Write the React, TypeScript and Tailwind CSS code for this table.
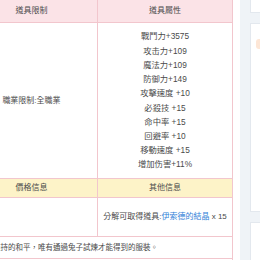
const stats = [
  "戰鬥力+3575",
  "攻击力+109",
  "魔法力+109",
  "防御力+149",
  "攻擊速度 +10",
  "必殺技 +15",
  "命中率 +15",
  "回避率 +10",
  "移動速度 +15",
  "增加伤害+11%",
];

export default function App() {
  return (
    <div className="w-[260px] h-[260px] overflow-hidden flex bg-white text-[#4a4a4a] text-[8px] font-['Liberation_Sans','Noto_Sans_CJK_TC',sans-serif]">
      {/* item table */}
      <div className="w-[268px] -ml-[35px] shrink-0 border-x border-[#f2c6cd] flex flex-col">
        <div className="flex h-[23px] border-b border-[#f2c6cd] bg-[#fbe3e7]">
          <div className="w-[132px] border-r border-[#f2c6cd] flex items-center justify-center">道具限制</div>
          <div className="flex-1 flex items-center justify-center">道具屬性</div>
        </div>
        <div className="flex h-[156px] border-b border-[#f2c6cd]">
          <div className="w-[132px] border-r border-[#f2c6cd] flex items-center justify-center">職業限制:全職業</div>
          <div className="flex-1 flex flex-col items-center justify-center leading-[14.2px] text-[8.3px]">
            {stats.map((s) => (
              <div key={s}>{s}</div>
            ))}
          </div>
        </div>
        <div className="flex h-[19px] border-b border-[#f2c6cd] bg-[#fdf3c8]">
          <div className="w-[132px] border-r border-[#f2c6cd] flex items-center justify-center">價格信息</div>
          <div className="flex-1 flex items-center justify-center">其他信息</div>
        </div>
        <div className="flex h-[39px] border-b border-[#f2c6cd]">
          <div className="w-[132px] border-r border-[#f2c6cd]" />
          <div className="flex-1 flex items-center justify-center">
            分解可取得道具:<span className="text-[#2f7fd8]">伊索德的結晶</span>&nbsp;x 15
          </div>
        </div>
        <div className="h-[22px] border-b border-[#f2c6cd] flex items-center pl-[12px] whitespace-nowrap text-[7.5px]">
          為了維持的和平，唯有通過兔子試煉才能得到的服裝。
        </div>
      </div>

      {/* side panel */}
      <div className="ml-[7px] flex-1 bg-[#eff3f7] pl-[10px] flex flex-col gap-[10px]">
        <div className="h-[13px] bg-white border-b border-l border-[#e3e8ee]" />
        <div className="h-[189px] bg-white border-y border-l border-[#e3e8ee] pt-[15px] pl-[5px]">
          <div className="w-[8px] h-[10px] rounded-l-[3px] bg-[#fde6d6]" />
        </div>
        <div className="flex-1 bg-white border-t border-l border-[#e3e8ee]" />
      </div>
    </div>
  );
}
